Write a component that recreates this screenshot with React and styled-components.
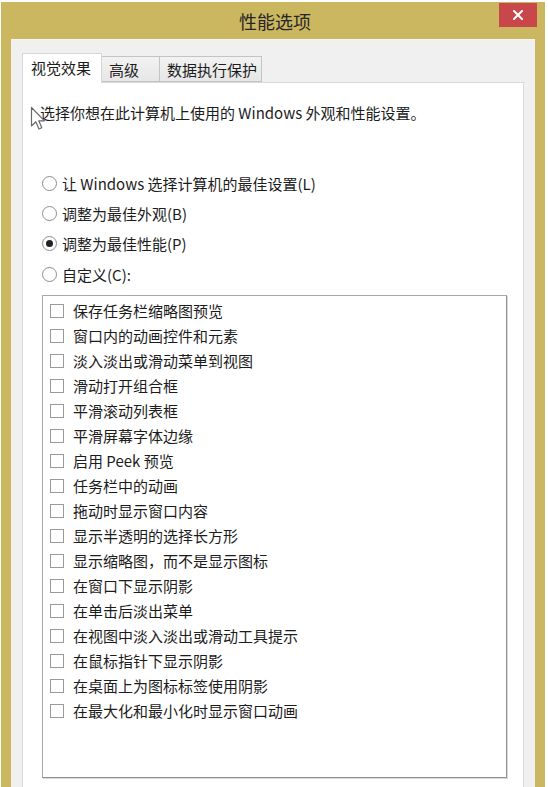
import React from "react";
import styled, { createGlobalStyle } from "styled-components";

const Global = createGlobalStyle`
  html, body { margin: 0; padding: 0; background: #ffffff; }
  body { font-family: "Noto Sans CJK SC", "Noto Sans", sans-serif; color: #1c1c1c; overflow: hidden; }
`;

const Window = styled.div`
  position: relative;
  margin: 2px 3px 0 1px;
  height: 800px;
  background: #cbb75f;
  padding: 0 10px;
  display: flex;
  flex-direction: column;
`;

const TitleBar = styled.div`
  height: 37px;
  display: flex;
  align-items: center;
  justify-content: center;
  font-size: 18px;
  color: #262626;
  padding-left: 4px;
`;

const CloseButton = styled.div`
  position: absolute;
  top: 1px;
  right: 8px;
  width: 38px;
  height: 24px;
  background: #c9464b;
  display: flex;
  align-items: center;
  justify-content: center;
`;

const Body = styled.div`
  flex: 1;
  background: #f0f0f0;
  border-top: 1px solid #f7f7f5;
  padding: 13px 10px 0 11px;
  display: flex;
  flex-direction: column;
`;

const TabStrip = styled.div`
  display: flex;
  align-items: flex-end;
  margin-bottom: -1px;
  position: relative;
  z-index: 1;
`;

const Tab = styled.div`
  box-sizing: border-box;
  width: ${(p) => p.$w}px;
  height: ${(p) => (p.$active ? 30 : 26)}px;
  margin-bottom: ${(p) => (p.$active ? 0 : 1)}px;
  margin-left: ${(p) => (p.$first ? 0 : -1)}px;
  padding-left: ${(p) => p.$pl}px;
  display: flex;
  align-items: center;
  font-size: 15px;
  color: #1c1c1c;
  white-space: nowrap;
  background: ${(p) => (p.$active ? "#ffffff" : "linear-gradient(#f2f2f2, #e6e6e6)")};
  border: 1px solid ${(p) => (p.$active ? "#d6d6d6" : "#c4c4c4")};
  border-bottom: ${(p) => (p.$active ? "none" : "1px solid #c4c4c4")};
  padding-bottom: ${(p) => (p.$active ? 2 : 0)}px;
  position: relative;
  z-index: ${(p) => (p.$active ? 2 : 1)};
`;

const Panel = styled.div`
  position: relative;
  flex: 1;
  margin-right: 1px;
  background: #ffffff;
  border: 1px solid #d9d9d9;
  padding: 20px 16px 0 19px;
  display: flex;
  flex-direction: column;
`;

const Description = styled.div`
  font-size: 15px;
  line-height: 20px;
  margin-left: -2px;
`;

const Cursor = styled.svg`
  position: absolute;
  left: 7px;
  top: 23px;
`;

const RadioGroup = styled.div`
  margin-top: 45px;
  display: flex;
  flex-direction: column;
`;

const RadioRow = styled.div`
  height: 30px;
  display: flex;
  align-items: center;
  gap: 5px;
  font-size: 15px;
  margin-top: ${(p) => (p.$nudge ? 1 : 0)}px;
`;

const RadioCircle = styled.span`
  box-sizing: border-box;
  width: 15px;
  height: 15px;
  border-radius: 50%;
  border: 1px solid #8c8c8c;
  background: #ffffff;
  display: flex;
  align-items: center;
  justify-content: center;
  &::after {
    content: "";
    width: 7px;
    height: 7px;
    border-radius: 50%;
    background: ${(p) => (p.$checked ? "#222222" : "transparent")};
  }
`;

const ListBox = styled.div`
  margin-top: 6px;
  height: 479px;
  background: #ffffff;
  border: 1px solid #a9a9a9;
  border-right-color: #8f8f8f;
  border-bottom-color: #8f8f8f;
  box-shadow: 1px 1px 0 #dcdcdc;
  padding: 2px 0 0 7px;
  display: flex;
  flex-direction: column;
`;

const CheckRow = styled.div`
  height: 25px;
  display: flex;
  align-items: center;
  gap: 9px;
  font-size: 15px;
`;

const CheckBox = styled.span`
  box-sizing: border-box;
  width: 14px;
  height: 14px;
  border: 1px solid #9a9a9a;
  background: #ffffff;
  flex: none;
`;

const tabs = [
  { label: "视觉效果", w: 80, pl: 8, active: true },
  { label: "高级", w: 59, pl: 7 },
  { label: "数据执行保护", w: 103, pl: 7 },
];

const radios = [
  { label: "让 Windows 选择计算机的最佳设置(L)" },
  { label: "调整为最佳外观(B)" },
  { label: "调整为最佳性能(P)", checked: true },
  { label: "自定义(C):", nudge: true },
];

const options = [
  "保存任务栏缩略图预览",
  "窗口内的动画控件和元素",
  "淡入淡出或滑动菜单到视图",
  "滑动打开组合框",
  "平滑滚动列表框",
  "平滑屏幕字体边缘",
  "启用 Peek 预览",
  "任务栏中的动画",
  "拖动时显示窗口内容",
  "显示半透明的选择长方形",
  "显示缩略图，而不是显示图标",
  "在窗口下显示阴影",
  "在单击后淡出菜单",
  "在视图中淡入淡出或滑动工具提示",
  "在鼠标指针下显示阴影",
  "在桌面上为图标标签使用阴影",
  "在最大化和最小化时显示窗口动画",
];

export default function App() {
  return (
    <>
      <Global />
      <Window>
        <TitleBar>性能选项</TitleBar>
        <CloseButton>
          <svg width="10" height="10" viewBox="0 0 10 10">
            <path d="M1 1 L9 9 M9 1 L1 9" stroke="#ffffff" strokeWidth="2" strokeLinecap="square" />
          </svg>
        </CloseButton>
        <Body>
          <TabStrip>
            {tabs.map((t, i) => (
              <Tab key={t.label} $w={t.w} $pl={t.pl} $active={t.active} $first={i === 0}>
                {t.label}
              </Tab>
            ))}
          </TabStrip>
          <Panel>
            <Cursor width="17" height="26" viewBox="0 0 17 26">
              <path
                d="M1.5 1.5 L1.5 20 L5.8 15.8 L9 23 L11.8 21.8 L8.8 14.8 L14.5 14.8 Z"
                fill="#ffffff"
                stroke="#6a6a6a"
                strokeWidth="1.2"
                strokeLinejoin="round"
              />
            </Cursor>
            <Description>选择你想在此计算机上使用的 Windows 外观和性能设置。</Description>
            <RadioGroup>
              {radios.map((r) => (
                <RadioRow key={r.label} $nudge={r.nudge}>
                  <RadioCircle $checked={r.checked} />
                  {r.label}
                </RadioRow>
              ))}
            </RadioGroup>
            <ListBox>
              {options.map((o) => (
                <CheckRow key={o}>
                  <CheckBox />
                  {o}
                </CheckRow>
              ))}
            </ListBox>
          </Panel>
        </Body>
      </Window>
    </>
  );
}
